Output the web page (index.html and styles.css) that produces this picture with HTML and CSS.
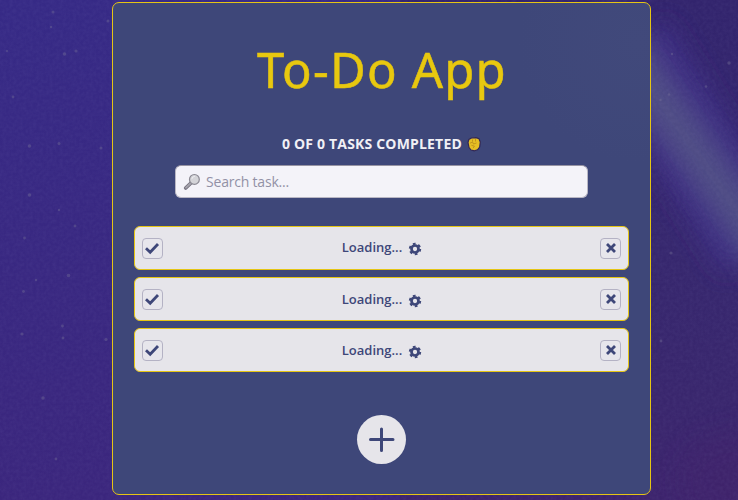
FILE: index.html
```html
<!DOCTYPE html>
<html lang="en">
<head>
<meta charset="utf-8">
<title>To-Do App</title>
<link rel="stylesheet" href="styles.css">
</head>
<body>
<svg class="sky" viewBox="0 0 738 500">
  <defs>
    <linearGradient id="left" x1="0" y1="0" x2="0.15" y2="1"><stop offset="0" stop-color="#362a86"/><stop offset="1" stop-color="#3b267d"/></linearGradient>
    <linearGradient id="right" x1="0" y1="0" x2="0" y2="1"><stop offset="0" stop-color="#32246d"/><stop offset=".5" stop-color="#36276e"/><stop offset=".8" stop-color="#39266d"/><stop offset="1" stop-color="#3d246d"/></linearGradient>
    <filter id="soft" x="-50%" y="-50%" width="200%" height="200%"><feGaussianBlur stdDeviation="12"/></filter>
    <filter id="grain" x="0" y="0" width="100%" height="100%"><feTurbulence type="fractalNoise" baseFrequency=".3" numOctaves="2" seed="4"/><feColorMatrix values="0 0 0 0 .4  0 0 0 0 .38  0 0 0 0 .7  .35 0 0 0 -.1"/></filter>
  </defs>
  <rect width="738" height="500" fill="url(#right)"/>
  <rect width="400" height="500" fill="url(#left)"/>
  <path d="M630 45 760 250" stroke="#3d2f82" stroke-width="85" filter="url(#soft)"/>
  <path d="M600 15 780 272" stroke="#4f4d85" stroke-width="42" filter="url(#soft)"/>
  <ellipse cx="738" cy="480" rx="60" ry="50" fill="#42226a" filter="url(#soft)" opacity=".4"/>
  <rect width="738" height="500" filter="url(#grain)" opacity=".3"/>
  <g fill="#777299" opacity=".4">
    <circle cx="53" cy="12" r="1.5"/><circle cx="51" cy="27" r="1.2"/><circle cx="64.500" cy="54" r="1.8"/><circle cx="76" cy="51" r="1.6"/><circle cx="108" cy="21" r="1.5"/><circle cx="7" cy="51" r="1.1"/><circle cx="13" cy="97" r="1.4"/><circle cx="29.500" cy="146" r="1.8"/><circle cx="59" cy="143.500" r="1.5"/><circle cx="101" cy="148" r="1.5"/><circle cx="29.500" cy="195" r="1.8"/><circle cx="59" cy="210" r="1.2"/><circle cx="75" cy="226" r="1.4"/><circle cx="24.500" cy="238" r="1.4"/><circle cx="68.500" cy="275.500" r="1.8"/><circle cx="36" cy="280" r="1.2"/><circle cx="23.500" cy="291.500" r="1.4"/><circle cx="62.500" cy="326" r="1.4"/><circle cx="22" cy="334" r="1.6"/><circle cx="63" cy="338" r="1.4"/><circle cx="106" cy="339.500" r="1.6"/><circle cx="43" cy="398" r="1.7"/><circle cx="56" cy="459" r="1.4"/>
    <circle cx="729" cy="63" r="1.7"/><circle cx="706" cy="86.500" r="1.3"/><circle cx="660.500" cy="100" r="1.2"/><circle cx="669" cy="94.500" r="1.2"/><circle cx="671" cy="253" r="1.6"/><circle cx="672" cy="54" r="1.2"/><circle cx="661" cy="341" r="1.4"/>
  </g>
</svg>
<svg class="symbols" width="0" height="0">
  <symbol id="check" viewBox="0 0 16 14"><path d="M2 7.2 6.2 11.2 14 3" fill="none" stroke="currentColor" stroke-width="2.8"/></symbol>
  <symbol id="cross" viewBox="0 0 12 12"><path d="M2 2 10 10M10 2 2 10" fill="none" stroke="currentColor" stroke-width="2.800"/></symbol>
  <symbol id="gear" viewBox="0 0 14 14"><g fill="none" stroke="currentColor"><circle cx="7" cy="7" r="3.500" stroke-width="2.700"/><circle cx="7" cy="7" r="5.2" stroke-width="2" stroke-dasharray="2.700 2.745"/></g></symbol>
</svg>
<main class="card">
  <h1 class="title">To-Do App</h1>
  <p class="counter"><span class="counter-text">0 OF 0 TASKS COMPLETED</span>
    <svg class="fist" viewBox="0 0 14 16"><path d="M1 6.500 1.800 3.500 4.500 2 9 1.600 12 2.800 13.300 6 12.700 11 10.500 13.800 7.500 14.800 4 14 2 11.500Z" fill="#e6bf24" stroke="#302658" stroke-width="1.2" stroke-linejoin="round"/><path d="M3 7.200 5.500 6l1 2 3-1M4.4 9.300l3 .8-1.2 2M5.500 3.500v2M8.500 3v2.500" fill="none" stroke="#a87b18" stroke-width=".6"/></svg>
  </p>
  <label class="search">
    <svg class="lens" viewBox="0 0 18 18"><path d="m9 9-6.3 6" stroke="#777480" stroke-width="3.700" stroke-linecap="round"/><path d="m9 9-6 5.700" stroke="#a6a4ad" stroke-width="1.800" stroke-linecap="round"/><circle cx="11.4" cy="6.4" r="4.900" fill="#d4d4d8" stroke="#8b8993" stroke-width="1.2"/><path d="M8.8 6.2a3 3 0 0 1 3-2.8" fill="none" stroke="#eeeef1"/></svg>
    <input class="search-input" type="text" placeholder="Search task...">
  </label>
  <ul class="tasks">
    <li class="task"><button class="box"><svg class="check"><use href="#check"/></svg></button><span class="task-text">Loading... <svg class="gear"><use href="#gear"/></svg></span><button class="box"><svg class="cross"><use href="#cross"/></svg></button></li>
    <li class="task"><button class="box"><svg class="check"><use href="#check"/></svg></button><span class="task-text">Loading... <svg class="gear"><use href="#gear"/></svg></span><button class="box"><svg class="cross"><use href="#cross"/></svg></button></li>
    <li class="task"><button class="box"><svg class="check"><use href="#check"/></svg></button><span class="task-text">Loading... <svg class="gear"><use href="#gear"/></svg></span><button class="box"><svg class="cross"><use href="#cross"/></svg></button></li>
  </ul>
  <button class="add"><svg class="plus" viewBox="0 0 26 26"><path d="M12.500 2v21.500M1.500 12.500h22.500" stroke="currentColor" stroke-width="3" stroke-linecap="round"/></svg></button>
</main>
</body>
</html>
```

FILE: styles.css
```css
* { box-sizing: border-box; }

body {
  margin: 0;
  height: 500px;
  overflow: hidden;
  padding: 2px 0 0 112px;
  font-family: "Open Sans", "Noto Sans", sans-serif;
  background: #3a287a;
}

.sky {
  position: absolute;
  top: 0;
  left: 0;
  width: 738px;
  height: 500px;
  z-index: -1;
}

.symbols { position: absolute; }

.card {
  width: 539px;
  height: 493px;
  border: 1px solid #e5c514;
  border-radius: 7px;
  padding: 31px 21px 0;
  display: flex;
  flex-direction: column;
  align-items: center;
  background: radial-gradient(circle 120px at 525px 40px, #41497b, #3e4779);
}

.title {
  margin: 0;
  font: 400 49px/70px "Noto Sans", sans-serif;
  letter-spacing: 1.2px;
  padding-left: 1px;
  color: #e8c80f;
  -webkit-text-stroke: .5px #e8c80f;
  white-space: nowrap;
}

.counter {
  margin: 28px 0 0;
  height: 22px;
  display: flex;
  align-items: center;
  gap: 5px;
  font-size: 14px;
  font-weight: 700;
  letter-spacing: .18px;
  color: #f1f0f5;
}

.fist { width: 14px; height: 16px; margin-top: 2px; }

.search {
  margin-top: 11px;
  width: 413px;
  height: 33px;
  display: flex;
  align-items: center;
  padding-left: 7px;
  gap: 5px;
  background: #f4f3f9;
  border: 1px solid #b9b7c4;
  border-top-color: #9794a3;
  border-radius: 6px;
}

.lens { width: 18px; height: 18px; }

.search-input {
  border: 0;
  padding: 0;
  background: none;
  font: 14px "Open Sans", sans-serif;
  letter-spacing: -.2px;
  outline: 0;
}

.search-input::placeholder { color: #9291a6; }

.tasks {
  list-style: none;
  margin: 28px 0 0;
  padding: 0;
  width: 495px;
  display: grid;
  gap: 7.2px;
}

.task {
  height: 44px;
  display: flex;
  align-items: center;
  justify-content: space-between;
  padding: 0 7px;
  background: #e6e5ea;
  border: 1px solid #e5c514;
  border-radius: 6px;
}

.task:first-child .task-text { margin-top: -2px; }

.task-text {
  display: flex;
  align-items: center;
  gap: 6px;
  font-size: 13px;
  font-weight: 600;
  padding-left: 1px;
  color: #3e4779;
}

.gear { width: 14px; height: 14px; margin-top: 3px; }

.box {
  width: 21px;
  height: 21px;
  padding: 0;
  display: grid;
  place-items: center;
  background: #e7e6ec;
  border: 1px solid #b4b2c4;
  border-radius: 4px;
  color: #3e4779;
}

.check { width: 16px; height: 14px; margin-right: 1px; }
.cross { width: 12px; height: 12px; }

.add {
  margin-top: 43px;
  width: 49px;
  height: 49px;
  flex: none;
  border: 0;
  border-radius: 50%;
  padding: 0;
  display: grid;
  place-items: center;
  background: #e6e5ea;
  color: #3e4779;
}

.plus { width: 26px; height: 26px; }
```
